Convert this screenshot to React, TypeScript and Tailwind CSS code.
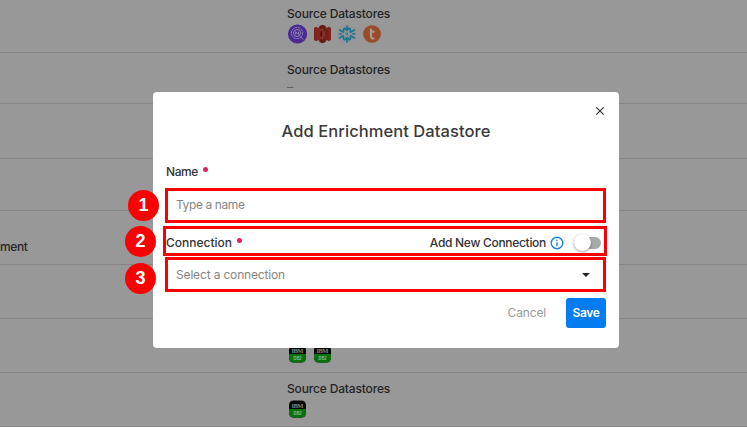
import type { ReactNode } from "react";

const font = "font-['Inter','Liberation_Sans',sans-serif]";

function QuestIcon() {
  return (
    <svg width="20" height="20" viewBox="0 0 20 20" fill="none">
      <circle cx="10.5" cy="10" r="9.6" fill="#4b2a92" />
      <g stroke="#a79bbd" strokeWidth=".8">
        <circle cx="10" cy="9" r="5.6" strokeDasharray="2.6 .7" />
        <circle cx="10" cy="9" r="3.5" />
        <path d="M8.7 10.5V7.8l2.8 2.7V7.8M13.2 12.5l3 3" />
      </g>
    </svg>
  );
}

function BucketIcon() {
  return (
    <svg width="20" height="20" viewBox="0 0 20 20">
      <path d="M2 3.8 5 2.8v14.4l-3-1z" fill="#7d241b" />
      <path d="M19 3.8 16 2.8v14.4l3-1z" fill="#7d241b" />
      <path d="M4.5 3.6h6v12.8h-6z" fill="#832920" />
      <path d="M10.5 3.6h6v12.8h-6z" fill="#741f17" />
      <path d="M7.3 4.5V2l3.2-1.2L13.7 2v2.5zM7.3 15.5V18l3.2 1.2 3.2-1.2v-2.5z" fill="#651912" />
      <path d="m8.2 7.5 2.3-.5v6l-2.3-.5z" fill="#541510" />
      <path d="m12.8 7.5-2.3-.5v6l2.3-.5z" fill="#8e3026" />
    </svg>
  );
}

function SnowflakeIcon() {
  return (
    <svg width="20" height="20" viewBox="0 0 20 20" fill="none">
      <circle cx="10" cy="10" r="10" fill="#929698" />
      <g stroke="#1b7390" strokeWidth="1.7" strokeLinecap="round" strokeLinejoin="round">
        <path d="M10 2v4.2M7.6 4.2 10 6.3l2.4-2.1M10 18v-4.2M7.6 15.8l2.4-2.1 2.4 2.1" />
        <path d="m2.6 6.1 3.9 2.1.2-3.3M17.4 6.1l-3.9 2.1-.2-3.3M2.6 13.9l3.9-2.1.2 3.3M17.4 13.9l-3.9-2.1-.2 3.3" />
        <path d="M2.4 10h1.7M17.6 10h-1.7" />
        <path d="m10 9 1 1-1 1-1-1z" strokeWidth="1" />
      </g>
    </svg>
  );
}

function TeradataIcon() {
  return (
    <svg width="20" height="20" viewBox="0 0 20 20" fill="none">
      <circle cx="10" cy="10" r="9.7" fill="#929496" />
      <circle cx="10" cy="10" r="8.8" fill="#9a4c27" />
      <path d="M9 4.8v7.4c0 2 1.3 2.7 3.4 2.1M9 7.7h3.4" stroke="#a29b98" strokeWidth="2.2" />
    </svg>
  );
}

function DbIcon() {
  return (
    <svg width="20" height="20" viewBox="0 0 20 20">
      <circle cx="10.5" cy="10" r="9.5" fill="#929698" />
      <rect x="2" y="1.5" width="17" height="17" rx="4.5" fill="#070908" />
      <path d="M2 10h17v4a4.5 4.5 0 0 1-4.5 4.5h-8A4.5 4.5 0 0 1 2 14z" fill="#08720d" />
      <text x="10.5" y="8.6" textAnchor="middle" textLength="12" fontFamily="Liberation Serif, serif" fontWeight="700" fontSize="6.5" fill="#7d8580">IBM</text>
      <text x="10.5" y="15.7" textAnchor="middle" textLength="8" lengthAdjust="spacingAndGlyphs" fontFamily="Liberation Sans, sans-serif" fontWeight="700" fontSize="5" fill="#8cba8d">DB2</text>
    </svg>
  );
}

function Row({ height, name, children }: { height: string; name?: string; children?: ReactNode }) {
  return (
    <div className={`flex shrink-0 border-b border-[#858585] ${height}`}>
      <div className="flex w-[287px] shrink-0 items-end pb-[9px] text-xs font-medium leading-4 tracking-[-0.4px] text-[#272727]">
        {name}
      </div>
      <div className="pt-[4px] text-xs font-medium text-[#242424]">{children}</div>
    </div>
  );
}

function Sources({ children }: { children: ReactNode }) {
  return (
    <>
      <div className="h-5 whitespace-nowrap leading-5 tracking-[-0.16px]">Source Datastores</div>
      <div className="flex h-5 gap-[5px]">{children}</div>
    </>
  );
}

function Required() {
  return <span className="mb-[5px] ml-[5px] size-[5px] rounded-full bg-[#e91e63]" />;
}

function Step({ n, place }: { n: number; place: string }) {
  return (
    <span className={`absolute flex size-[31px] items-center justify-center rounded-full bg-[#fb0000] pb-px font-['Liberation_Sans',sans-serif] text-[18px] font-bold leading-none text-white ${place}`}>
      {n}
    </span>
  );
}

export default function App() {
  return (
    <div className={`relative h-[427px] w-[747px] overflow-hidden bg-[#989898] ${font}`}>
      <div className="flex flex-col">
        <Row height="h-[53px]">
          <Sources>
            <QuestIcon />
            <BucketIcon />
            <SnowflakeIcon />
            <TeradataIcon />
          </Sources>
        </Row>
        <Row height="h-[51px]">
          <div className="pt-[3px]">
            <Sources>
              <span className="leading-[13px] text-[#606060]">–</span>
            </Sources>
          </div>
        </Row>
        <Row height="h-[55px]" />
        <Row height="h-[52px]" />
        <Row height="h-[54px]" name="ment" />
        <Row height="h-[54px]" />
        <Row height="h-[54px]">
          <div className="pt-px">
            <Sources>
              <DbIcon />
              <DbIcon />
            </Sources>
          </div>
        </Row>
        <Row height="h-[54px]">
          <div className="pt-[2px]">
            <Sources>
              <DbIcon />
            </Sources>
          </div>
        </Row>
      </div>

      <div className="absolute left-[153px] top-[92px] flex h-[256px] w-[466px] flex-col rounded-[4px] bg-white text-xs text-[#333]">
        <div className="flex h-[29px] shrink-0 items-end justify-end pb-[5px] pr-[14px]">
          <svg width="10" height="10" viewBox="0 0 10 10" stroke="#333" strokeWidth="1.2">
            <path d="m1.3 1.3 7.4 7.4M8.7 1.3 1.3 8.7" />
          </svg>
        </div>
        <h1 className="h-[43px] shrink-0 text-center text-[16.5px] font-medium leading-5 tracking-[0.07px] text-[#3a3a3a]">
          Add Enrichment Datastore
        </h1>
        <div className="flex h-4 shrink-0 items-center pl-[13px] font-medium tracking-[-0.4px]">
          Name
          <Required />
        </div>
        <div className="ml-[12px] mt-[8px] flex h-[35px] w-[441px] shrink-0 items-center border-[3px] border-[#fb0000] pb-px pl-[8px] tracking-[-0.4px] text-[#858585]">
          Type a name
        </div>
        <div className="ml-[10px] mt-[3px] flex h-[30px] w-[444px] shrink-0 items-center border-[3px] border-[#fb0000] pr-[3px] pt-[3px] font-medium">
          Connection
          <Required />
          <span className="ml-auto tracking-[-0.3px]">Add New Connection</span>
          <svg className="ml-[4px]" width="14" height="14" viewBox="0 0 14 14" fill="none" stroke="#1683ed" strokeWidth="1.4">
            <circle cx="7" cy="7" r="5.8" />
            <path d="M7 6.2v4M7 3.7V5" />
          </svg>
          <span className="ml-[10px] flex h-[12px] w-[27px] items-center rounded-full bg-[#a9a9a9]">
            <span className="size-[17px] shrink-0 rounded-full bg-white shadow-[0_1px_3px_rgba(0,0,0,0.4)]" />
          </span>
        </div>
        <div className="ml-[12px] mt-px flex h-[35px] w-[441px] shrink-0 items-center justify-between border-[3px] border-[#fb0000] pl-[8px] pr-[13px] tracking-[-0.16px] text-[#858585]">
          Select a connection
          <span className="border-x-[4px] border-t-[4px] border-x-transparent border-t-[#252525]" />
        </div>
        <div className="mt-[6px] flex h-[30px] shrink-0 items-center justify-end pr-[13px]">
          <button className="mr-[20px] tracking-[-0.15px] text-[#999]">Cancel</button>
          <button className="h-[30px] w-[40px] rounded-[3px] bg-[#047cf1] font-semibold tracking-[-0.35px] text-white">Save</button>
        </div>
      </div>
      <Step n={1} place="left-[128px] top-[190px]" />
      <Step n={2} place="left-[125px] top-[226px]" />
      <Step n={3} place="left-[125px] top-[263px]" />
    </div>
  );
}
